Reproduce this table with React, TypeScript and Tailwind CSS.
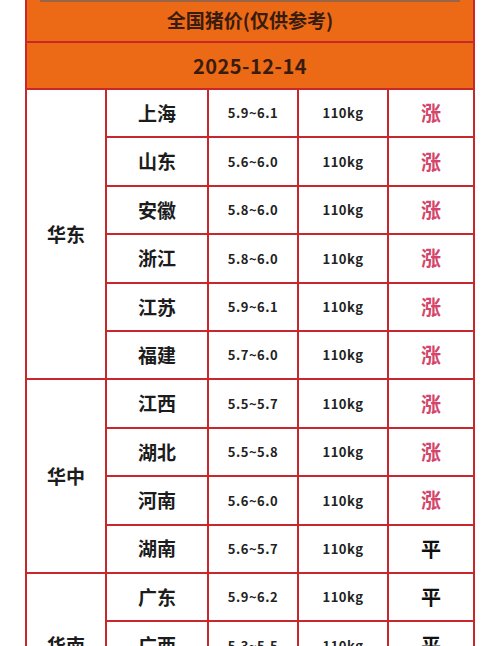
import { Fragment } from "react";

const groups = [
  {
    region: "华东",
    span: "row-span-6",
    rows: [
      { name: "上海", price: "5.9~6.1", weight: "110kg", trend: "涨" },
      { name: "山东", price: "5.6~6.0", weight: "110kg", trend: "涨" },
      { name: "安徽", price: "5.8~6.0", weight: "110kg", trend: "涨" },
      { name: "浙江", price: "5.8~6.0", weight: "110kg", trend: "涨" },
      { name: "江苏", price: "5.9~6.1", weight: "110kg", trend: "涨" },
      { name: "福建", price: "5.7~6.0", weight: "110kg", trend: "涨" },
    ],
  },
  {
    region: "华中",
    span: "row-span-4",
    rows: [
      { name: "江西", price: "5.5~5.7", weight: "110kg", trend: "涨" },
      { name: "湖北", price: "5.5~5.8", weight: "110kg", trend: "涨" },
      { name: "河南", price: "5.6~6.0", weight: "110kg", trend: "涨" },
      { name: "湖南", price: "5.6~5.7", weight: "110kg", trend: "平" },
    ],
  },
  {
    region: "华南",
    span: "row-span-3",
    rows: [
      { name: "广东", price: "5.9~6.2", weight: "110kg", trend: "平" },
      { name: "广西", price: "5.3~5.5", weight: "110kg", trend: "平" },
      { name: "海南", price: "5.8~6.0", weight: "110kg", trend: "平" },
    ],
  },
];

const cell = "flex items-center justify-center border-[#c8282c] border-b-2";

export default function App() {
  return (
    <div className="min-h-screen bg-white font-['Noto_Sans_CJK_SC',sans-serif]">
      <div className="ml-[25px] w-[450px] border-x-2 border-[#c8282c]">
        <div className="bg-[#ec6916]">
          <div className="mx-[13px] h-[2px] bg-[#9a6446]" />
          <div className="flex h-[41px] items-center justify-center border-b-2 border-[#c8282c] pb-[2px] text-[19px] font-bold text-[#3a1c0e]">
            全国猪价(仅供参考)
          </div>
          <div className="flex h-[47px] items-center justify-center border-b-2 border-[#c8282c] text-[20px] font-bold tracking-[0.5px] text-[#3a1c0e]">
            2025-12-14
          </div>
        </div>
        <div className="grid grid-cols-[80px_102px_90px_90px_84px] auto-rows-[48.4px]">
          {groups.map((g) => (
            <Fragment key={g.region}>
              <div className={`${g.span} ${cell} border-r-2 text-[19px] font-bold text-[#1c1c1c]`}>
                {g.region}
              </div>
              {g.rows.map((r) => (
                <Fragment key={r.name}>
                  <div className={`${cell} border-r-2 text-[19px] font-bold text-[#1c1c1c]`}>{r.name}</div>
                  <div className={`${cell} border-r-2 text-[13px] font-bold tracking-[0.5px] text-[#222]`}>
                    {r.price}
                  </div>
                  <div className={`${cell} border-r-2 text-[13px] font-bold tracking-[0.5px] text-[#222]`}>
                    {r.weight}
                  </div>
                  <div
                    className={`${cell} text-[20px] ${
                      r.trend === "涨" ? "font-semibold text-[#d4456a]" : "font-bold text-[#111]"
                    }`}
                  >
                    {r.trend}
                  </div>
                </Fragment>
              ))}
            </Fragment>
          ))}
        </div>
      </div>
    </div>
  );
}
